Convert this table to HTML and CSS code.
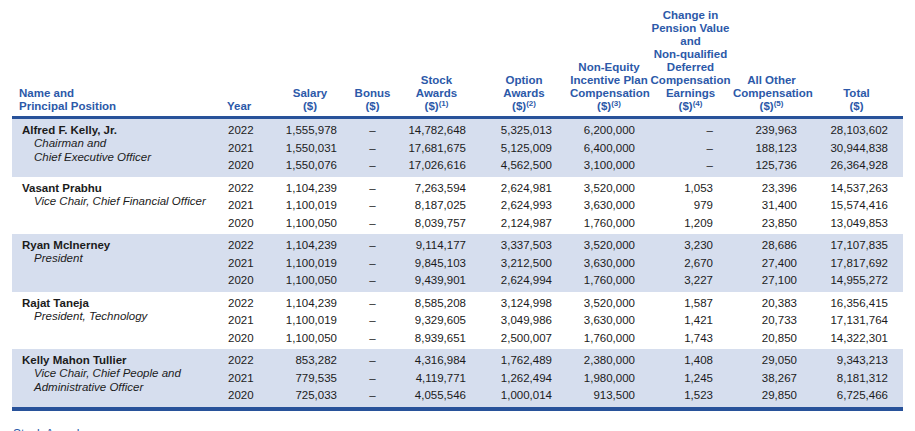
FILE: index.html
```html
<!DOCTYPE html>
<html>
<head>
<meta charset="utf-8">
<link rel="stylesheet" href="styles.css">
</head>
<body>
<table class="sct">
<colgroup>
<col class="w-name"><col class="w-yr"><col class="w-sal"><col class="w-bon"><col class="w-stk"><col class="w-opt"><col class="w-neq"><col class="w-pen"><col class="w-oth"><col class="w-tot">
</colgroup>
<thead>
<tr>
<th class="h-name">Name and<br>Principal Position</th>
<th class="h-yr">Year</th>
<th>Salary<br>($)</th>
<th>Bonus<br>($)</th>
<th>Stock<br>Awards<br>($)<sup>(1)</sup></th>
<th>Option<br>Awards<br>($)<sup>(2)</sup></th>
<th>Non-Equity<br>Incentive Plan<br>Compensation<br>($)<sup>(3)</sup></th>
<th>Change in<br>Pension Value<br>and<br>Non-qualified<br>Deferred<br>Compensation<br>Earnings<br>($)<sup>(4)</sup></th>
<th>All Other<br>Compensation<br>($)<sup>(5)</sup></th>
<th>Total<br>($)</th>
</tr>
</thead>
<tbody class="shade">
<tr class="first">
<td class="name" rowspan="3"><b>Alfred F. Kelly, Jr.</b><i>Chairman and<br>Chief Executive Officer</i></td>
<td class="yr">2022</td><td class="sal">1,555,978</td><td class="bon">–</td><td class="stk">14,782,648</td><td class="opt">5,325,013</td><td class="neq">6,200,000</td><td class="pen">–</td><td class="oth">239,963</td><td class="tot">28,103,602</td>
</tr>
<tr>
<td class="yr">2021</td><td class="sal">1,550,031</td><td class="bon">–</td><td class="stk">17,681,675</td><td class="opt">5,125,009</td><td class="neq">6,400,000</td><td class="pen">–</td><td class="oth">188,123</td><td class="tot">30,944,838</td>
</tr>
<tr class="last">
<td class="yr">2020</td><td class="sal">1,550,076</td><td class="bon">–</td><td class="stk">17,026,616</td><td class="opt">4,562,500</td><td class="neq">3,100,000</td><td class="pen">–</td><td class="oth">125,736</td><td class="tot">26,364,928</td>
</tr>
</tbody>
<tbody>
<tr class="first">
<td class="name" rowspan="3"><b>Vasant Prabhu</b><i>Vice Chair, Chief Financial Officer</i></td>
<td class="yr">2022</td><td class="sal">1,104,239</td><td class="bon">–</td><td class="stk">7,263,594</td><td class="opt">2,624,981</td><td class="neq">3,520,000</td><td class="pen">1,053</td><td class="oth">23,396</td><td class="tot">14,537,263</td>
</tr>
<tr>
<td class="yr">2021</td><td class="sal">1,100,019</td><td class="bon">–</td><td class="stk">8,187,025</td><td class="opt">2,624,993</td><td class="neq">3,630,000</td><td class="pen">979</td><td class="oth">31,400</td><td class="tot">15,574,416</td>
</tr>
<tr class="last">
<td class="yr">2020</td><td class="sal">1,100,050</td><td class="bon">–</td><td class="stk">8,039,757</td><td class="opt">2,124,987</td><td class="neq">1,760,000</td><td class="pen">1,209</td><td class="oth">23,850</td><td class="tot">13,049,853</td>
</tr>
</tbody>
<tbody class="shade">
<tr class="first">
<td class="name" rowspan="3"><b>Ryan McInerney</b><i>President</i></td>
<td class="yr">2022</td><td class="sal">1,104,239</td><td class="bon">–</td><td class="stk">9,114,177</td><td class="opt">3,337,503</td><td class="neq">3,520,000</td><td class="pen">3,230</td><td class="oth">28,686</td><td class="tot">17,107,835</td>
</tr>
<tr>
<td class="yr">2021</td><td class="sal">1,100,019</td><td class="bon">–</td><td class="stk">9,845,103</td><td class="opt">3,212,500</td><td class="neq">3,630,000</td><td class="pen">2,670</td><td class="oth">27,400</td><td class="tot">17,817,692</td>
</tr>
<tr class="last">
<td class="yr">2020</td><td class="sal">1,100,050</td><td class="bon">–</td><td class="stk">9,439,901</td><td class="opt">2,624,994</td><td class="neq">1,760,000</td><td class="pen">3,227</td><td class="oth">27,100</td><td class="tot">14,955,272</td>
</tr>
</tbody>
<tbody>
<tr class="first">
<td class="name" rowspan="3"><b>Rajat Taneja</b><i>President, Technology</i></td>
<td class="yr">2022</td><td class="sal">1,104,239</td><td class="bon">–</td><td class="stk">8,585,208</td><td class="opt">3,124,998</td><td class="neq">3,520,000</td><td class="pen">1,587</td><td class="oth">20,383</td><td class="tot">16,356,415</td>
</tr>
<tr>
<td class="yr">2021</td><td class="sal">1,100,019</td><td class="bon">–</td><td class="stk">9,329,605</td><td class="opt">3,049,986</td><td class="neq">3,630,000</td><td class="pen">1,421</td><td class="oth">20,733</td><td class="tot">17,131,764</td>
</tr>
<tr class="last">
<td class="yr">2020</td><td class="sal">1,100,050</td><td class="bon">–</td><td class="stk">8,939,651</td><td class="opt">2,500,007</td><td class="neq">1,760,000</td><td class="pen">1,743</td><td class="oth">20,850</td><td class="tot">14,322,301</td>
</tr>
</tbody>
<tbody class="shade">
<tr class="first">
<td class="name" rowspan="3"><b>Kelly Mahon Tullier</b><i>Vice Chair, Chief People and<br>Administrative Officer</i></td>
<td class="yr">2022</td><td class="sal">853,282</td><td class="bon">–</td><td class="stk">4,316,984</td><td class="opt">1,762,489</td><td class="neq">2,380,000</td><td class="pen">1,408</td><td class="oth">29,050</td><td class="tot">9,343,213</td>
</tr>
<tr>
<td class="yr">2021</td><td class="sal">779,535</td><td class="bon">–</td><td class="stk">4,119,771</td><td class="opt">1,262,494</td><td class="neq">1,980,000</td><td class="pen">1,245</td><td class="oth">38,267</td><td class="tot">8,181,312</td>
</tr>
<tr class="last">
<td class="yr">2020</td><td class="sal">725,033</td><td class="bon">–</td><td class="stk">4,055,546</td><td class="opt">1,000,014</td><td class="neq">913,500</td><td class="pen">1,523</td><td class="oth">29,850</td><td class="tot">6,725,466</td>
</tr>
</tbody>
</table>
<p class="next">Stock Awards</p>
</body>
</html>
```
FILE: styles.css
```css
html, body {
  margin: 0;
  background: #ffffff;
}
body {
  padding: 9px 12px 0;
  font-family: "Liberation Sans", Arial, sans-serif;
  font-size: 11.5px;
  color: #1b1b1b;
  overflow: hidden;
}
.sct {
  width: 891px;
  table-layout: fixed;
  border-collapse: collapse;
  border-bottom: 4px solid #28529a;
}
.w-name { width: 210px; }
.w-yr { width: 48px; }
.w-sal { width: 80px; }
.w-bon { width: 45px; }
.w-stk { width: 83px; }
.w-opt { width: 92px; }
.w-neq { width: 78px; }
.w-pen { width: 85px; }
.w-oth { width: 77px; }
.w-tot { width: 93px; }

.sct thead {
  border-bottom: 3px solid #28529a;
}
.sct th {
  padding: 0 0 3px;
  font-weight: bold;
  color: #2c59a9;
  line-height: 13px;
  text-align: center;
  vertical-align: bottom;
  white-space: nowrap;
}
.sct th.h-name {
  text-align: left;
  padding-left: 7px;
}
.sct th.h-yr {
  text-align: left;
  padding-left: 5px;
}
.sct sup {
  font-size: 8px;
  line-height: 0;
  vertical-align: 4px;
}
.shade {
  background: #d6deee;
}
.sct td {
  padding: 0;
  line-height: 17.5px;
  text-align: right;
  white-space: nowrap;
  vertical-align: top;
}
.sct tr.first td {
  padding-top: 3px;
}
.sct tr.last td {
  padding-bottom: 2px;
}
.sct tr.first td.name {
  text-align: left;
  line-height: 13.3px;
  padding: 5px 0 0 10px;
}
.name b {
  display: block;
  font-weight: bold;
}
.name i {
  display: block;
  padding-left: 12px;
}
.sct td.yr {
  text-align: left;
  padding-left: 6px;
}
.sct td.sal { padding-right: 13px; }
.sct td.bon { text-align: center; }
.sct td.stk { padding-right: 12px; }
.sct td.opt { padding-right: 18px; }
.sct td.neq { padding-right: 13px; }
.sct td.pen { padding-right: 20px; }
.sct td.oth { padding-right: 13px; }
.sct td.tot { padding-right: 15px; }

.next {
  margin: 16px 0 0 1px;
  font-size: 12px;
  line-height: 14px;
  color: #2c59a9;
}
```
